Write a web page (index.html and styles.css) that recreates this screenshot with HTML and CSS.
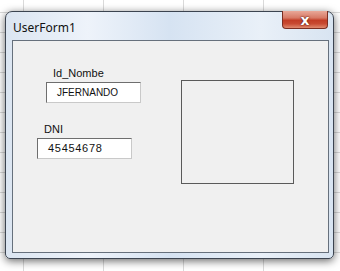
FILE: index.html
```html
<!DOCTYPE html>
<html lang="en">
<head>
  <meta charset="UTF-8">
  <title>UserForm1</title>
  <link rel="stylesheet" href="styles.css">
</head>
<body>
  <div class="window">
    <div class="titlebar">
      <span class="title">UserForm1</span>
      <button class="close">x</button>
    </div>

    <div class="client">
      <div class="fields">
        <div class="field field-name">
          <label>Id_Nombe</label>
          <div class="textbox name">JFERNANDO</div>
        </div>
        <div class="field field-dni">
          <label>DNI</label>
          <div class="textbox dni">45454678</div>
        </div>
      </div>
      <div class="picture"></div>
    </div>
  </div>
</body>
</html>
```

FILE: styles.css
```css
html, body {
  height: 100%;
}
body {
  margin: 0;
  padding: 11px 0 0 5px;
  box-sizing: border-box;
  overflow: hidden;
  font-family: 'Liberation Sans', Arial, sans-serif;
  color: #000;
  background-color: #fff;
  background-image:
    linear-gradient(90deg, transparent 23px, #dadada 23px, #dadada 24px, transparent 24px),
    linear-gradient(180deg, transparent 12px, #dadada 12px, #dadada 13px, transparent 13px);
  background-size: 80px 100%, 100% 20px;
}
.window {
  width: 329px;
  height: 248px;
  box-sizing: border-box;
  border: 1px solid #3c4450;
  border-radius: 7px 7px 5px 5px;
  background: linear-gradient(90deg, #dbe5f1 0%, #eef3fa 25%, #d6e3f2 50%, #e9f0f8 78%, #d8e4f1 100%);
  box-shadow: 0 2px 9px rgba(0,0,0,0.6);
  display: flex;
  flex-direction: column;
}
.titlebar {
  height: 28px;
  display: flex;
  align-items: flex-start;
}
.title {
  font-family: 'Noto Sans', 'Open Sans', sans-serif;
  font-size: 12px;
  line-height: 16px;
  margin: 8px 0 0 7px;
  color: #111;
  flex: 1;
}
.close {
  width: 46px;
  height: 18px;
  margin: -1px 5px 0 0;
  padding: 0;
  border: 1px solid #7b2e22;
  border-top: none;
  border-radius: 0 0 4px 4px;
  background: linear-gradient(180deg, #e9a898 0%, #d77a66 40%, #c23d26 55%, #c84a32 75%, #e08a6f 100%);
  color: #fff;
  font-family: 'DejaVu Sans', sans-serif;
  font-weight: bold;
  font-size: 14px;
  line-height: 14px;
  text-shadow: 0 0 2px #5a1a10, 0 0 1px #5a1a10;
  cursor: pointer;
}
.client {
  flex: 1;
  margin: 0 4px 5px 6px;
  border: 1px solid #66707c;
  background: #f0f0f0;
  display: flex;
  align-items: flex-start;
  padding-left: 24px;
}
.fields {
  margin-top: 26px;
  display: flex;
  flex-direction: column;
}
.field label {
  display: block;
  font-size: 11px;
  line-height: 13px;
  padding-left: 7px;
  margin-bottom: 2px;
  color: #111;
}
.field-name {
  padding-left: 9px;
}
.field-dni {
  margin-top: 20px;
}
.textbox {
  width: 95px;
  height: 21px;
  box-sizing: border-box;
  border: 1px solid #c9c9c9;
  border-top-color: #6e6e6e;
  border-left-color: #6e6e6e;
  background: #fff;
  padding-left: 10px;
  font-size: 11px;
  line-height: 19px;
  color: #111;
}
.textbox.name {
  font-size: 10px;
}
.textbox.dni {
  letter-spacing: 0.7px;
}
.picture {
  width: 113px;
  height: 104px;
  box-sizing: border-box;
  margin: 39px 0 0 40px;
  border: 1px solid #5a5a5a;
}
```
